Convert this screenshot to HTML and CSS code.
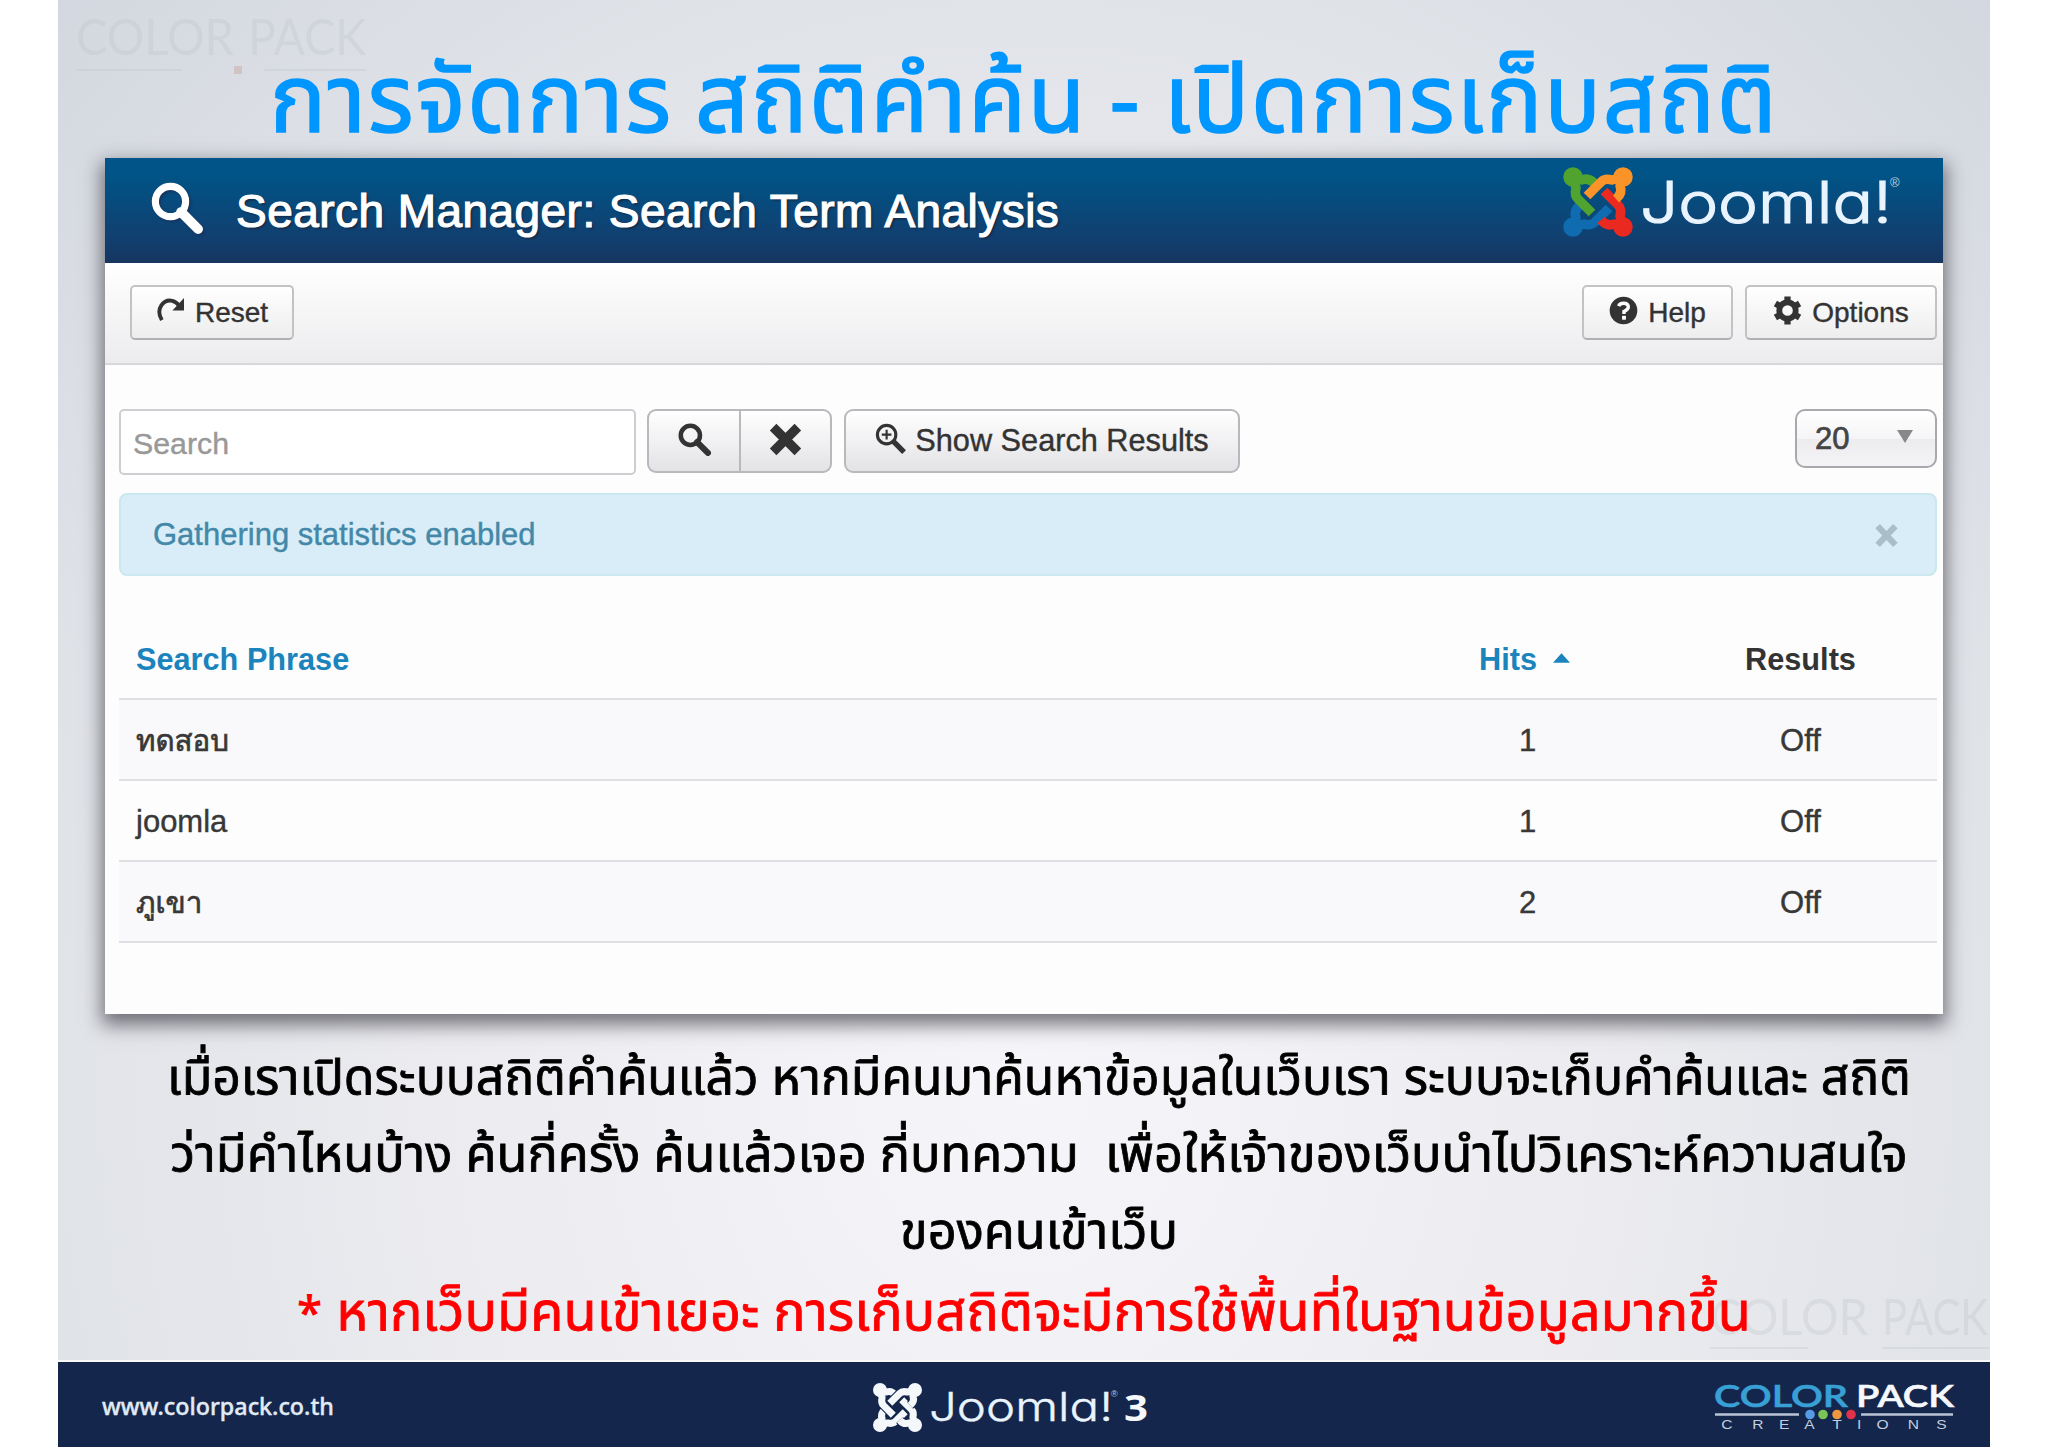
FILE: index.html
```html
<!DOCTYPE html>
<html lang="th">
<head>
<meta charset="utf-8">
<title>Joomla Search Manager</title>
<link rel="stylesheet" href="styles.css">
</head>
<body>
<svg class="defs" aria-hidden="true">
  <defs>
    <g id="arm" fill="none" stroke-linejoin="round">
      <path d="M10 10L19 13Q26 10 32 17M10 10L13 21Q11 28 15 32L29 46"/>
    </g>
    <symbol id="magnifier" viewBox="0 0 32 32">
      <circle cx="12" cy="12" r="9.3" fill="none" stroke="currentColor" stroke-width="4.4"/>
      <path d="M18.5 18.5L29 29" stroke="currentColor" stroke-width="6" stroke-linecap="round"/>
    </symbol>
  </defs>
</svg>
<main class="slide">
  <svg class="mark mark-top" viewBox="0 0 300 90"><text x="2" y="48" textLength="158" lengthAdjust="spacingAndGlyphs">COLOR</text><text x="174" y="48" textLength="118" lengthAdjust="spacingAndGlyphs">PACK</text><path d="M2 63H108M190 63H292" stroke="currentColor" stroke-width="2"/><rect x="160" y="59" width="8" height="8" fill="#c08a80"/></svg>
  <svg class="mark mark-bottom" viewBox="0 0 300 90"><text x="2" y="48" textLength="158" lengthAdjust="spacingAndGlyphs">COLOR</text><text x="174" y="48" textLength="106" lengthAdjust="spacingAndGlyphs">PACK</text><path d="M2 61H100M174 61H282" stroke="currentColor" stroke-width="2"/></svg>
  <h1 class="title">การจัดการ สถิติคำค้น - เปิดการเก็บสถิติ</h1>
  <section class="panel">
    <header class="panel-head">
      <svg class="head-icon"><use href="#magnifier"/></svg>
      <h2>Search Manager: Search Term Analysis</h2>
      <svg class="joomla" viewBox="0 0 342 72">
        <g stroke-width="9.5">
          <g stroke="#0f6cb0" fill="#0f6cb0" transform="rotate(-90 35 35)"><use href="#arm"/><circle cx="10" cy="10" r="5"/></g>
          <g stroke="#ea2a20" fill="#ea2a20" transform="rotate(180 35 35)"><use href="#arm"/><circle cx="10" cy="10" r="5"/></g>
          <g stroke="#4fa32e" fill="#4fa32e"><use href="#arm"/><circle cx="10" cy="10" r="5"/></g>
          <g stroke="#fa9328" fill="#fa9328" transform="rotate(90 35 35)"><use href="#arm"/><circle cx="10" cy="10" r="5"/></g>
        </g>
        <text class="wordmark" x="77" y="56" textLength="252" lengthAdjust="spacingAndGlyphs">Joomla!</text>
        <text class="reg" x="327" y="20">®</text>
      </svg>
    </header>
    <div class="toolbar">
      <button class="btn reset"><svg viewBox="0 0 30 28"><path d="M6 25C-1 13 8 3 17 5Q21 6 24 10" fill="none" stroke="currentColor" stroke-width="4"/><path d="M29 2V15H17Z" fill="currentColor"/></svg>Reset</button>
      <button class="btn help"><svg viewBox="0 0 30 30"><circle cx="15" cy="15" r="14.3" fill="currentColor"/><path d="M10 10.500Q11 7.500 15 7.500Q20 7.500 20 11.500Q20 14 15.500 16V18.500" fill="none" stroke="#fff" stroke-width="3.5"/><rect x="13.500" y="20.500" width="4" height="4" fill="#fff"/></svg>Help</button>
      <button class="btn options"><svg viewBox="0 0 30 30"><circle cx="15" cy="15" r="8.5" fill="none" stroke="currentColor" stroke-width="6"/><path d="M15 .5V6M15 24V29.500M2.500 7.700L7.200 10.500M22.800 19.500L27.500 22.300M2.500 22.300L7.200 19.500M22.800 10.500L27.500 7.700" stroke="currentColor" stroke-width="6.500"/></svg>Options</button>
    </div>
    <div class="content">
      <div class="filters">
        <div class="search">Search</div>
        <div class="group"><button class="btn"><svg viewBox="0 0 32 32"><use href="#magnifier"/></svg></button><button class="btn"><svg viewBox="0 0 32 32"><path d="M4 4L28 28M28 4L4 28" stroke="currentColor" stroke-width="9"/></svg></button></div>
        <button class="btn show"><svg viewBox="0 0 32 32"><circle cx="12" cy="12" r="9.500" fill="none" stroke="currentColor" stroke-width="3.200"/><path d="M12 7V17M7 12H17" stroke="currentColor" stroke-width="2.200"/><path d="M19 19L30 30" stroke="currentColor" stroke-width="5.500"/></svg>Show Search Results</button>
        <div class="select">20<svg viewBox="0 0 16 13"><path d="M0 0H16L8 13Z" fill="#888"/></svg></div>
      </div>
      <div class="alert"><span>Gathering statistics enabled</span><svg viewBox="0 0 22 24"><path d="M2.500 3L19.500 21M19.500 3L2.500 21" stroke="#a8bfca" stroke-width="6"/></svg></div>
      <div class="table">
        <div class="row head"><span class="link">Search Phrase</span><span class="link hits">Hits<svg viewBox="0 0 16 9"><path d="M0 9L8 0L16 9Z" fill="#1b84bd"/></svg></span><span class="res">Results</span></div>
        <div class="row odd"><span class="thai">ทดสอบ</span><span class="num">1</span><span class="res">Off</span></div>
        <div class="row"><span>joomla</span><span class="num">1</span><span class="res">Off</span></div>
        <div class="row odd"><span class="thai">ภูเขา</span><span class="num">2</span><span class="res">Off</span></div>
      </div>
    </div>
  </section>
  <div class="notes">
    <p class="l1">เมื่อเราเปิดระบบสถิติคำค้นแล้ว หากมีคนมาค้นหาข้อมูลในเว็บเรา ระบบจะเก็บคำค้นและ สถิติ</p>
    <p class="l2">ว่ามีคำไหนบ้าง ค้นกี่ครั้ง ค้นแล้วเจอ กี่บทความ&nbsp; เพื่อให้เจ้าของเว็บนำไปวิเคราะห์ความสนใจ</p>
    <p class="l3">ของคนเข้าเว็บ</p>
    <p class="warn"><b>*</b> หากเว็บมีคนเข้าเยอะ การเก็บสถิติจะมีการใช้พื้นที่ในฐานข้อมูลมากขึ้น</p>
  </div>
  <footer class="footer">
    <span class="url">www.colorpack.co.th</span>
    <svg class="joomla3" viewBox="0 0 280 56">
      <g transform="translate(0 3) scale(.7)">
        <g id="knot"><g stroke="#14264b" stroke-width="13"><use href="#arm" transform="rotate(-90 35 35)"/></g><g stroke="#f4f8fb" stroke-width="10" fill="#f4f8fb" transform="rotate(-90 35 35)"><use href="#arm"/><circle cx="10" cy="10" r="5"/></g></g>
        <use href="#knot" transform="rotate(-90 35 35)"/>
        <use href="#knot" transform="rotate(90 35 35)"/>
        <use href="#knot" transform="rotate(180 35 35)"/>
      </g>
      <text class="wordmark" x="56" y="41" textLength="184" lengthAdjust="spacingAndGlyphs">Joomla!</text>
      <text class="reg" x="238" y="17">®</text>
      <text class="three" x="251" y="41" textLength="24" lengthAdjust="spacingAndGlyphs">3</text>
    </svg>
    <svg class="brand" viewBox="0 0 242 60">
      <text class="color" x="0" y="32" textLength="134" lengthAdjust="spacingAndGlyphs">COLOR</text>
      <text class="pack" x="142" y="32" textLength="98" lengthAdjust="spacingAndGlyphs">PACK</text>
      <path d="M1 39.500H85M147 39.500H239" stroke="#b9c5d6" stroke-width="2.500"/>
      <circle cx="96" cy="39.500" r="4.800" fill="#559be5"/><circle cx="109" cy="39.500" r="4.800" fill="#7bc556"/><circle cx="123" cy="39.500" r="4.800" fill="#ed9740"/><circle cx="137" cy="39.500" r="4.800" fill="#e2314a"/>
      <g transform="scale(1.3 1)"><text class="creations" x="5.500 29.500 50 69.500 91 110 125 149 171" y="54">CREATIONS</text></g>
    </svg>
  </footer>
</main>
</body>
</html>
```
FILE: styles.css
```css
* { box-sizing: border-box; }
body { margin: 0; background: #fff; width: 2048px; height: 1447px; overflow: hidden; font-family: "Liberation Sans", "Noto Sans Thai", sans-serif; color: #383838; }
h1, h2, p { margin: 0; font-weight: 400; }
.defs { position: absolute; width: 0; height: 0; }
.slide { position: relative; width: 1932px; height: 1447px; margin-left: 58px; display: flex; flex-direction: column; background: radial-gradient(ellipse at 50% 75%, #f6f5f9 0%, #ececf0 42%, #dfe2e7 75%, #d3d7df 100%); overflow: hidden; }
.mark { position: absolute; width: 300px; height: 90px; color: #bcc3c8; opacity: .3; }
.mark text { font: 400 50px Lato, sans-serif; fill: currentColor; }
.mark-top { left: 16px; top: 7px; }
.mark-bottom { left: 1650px; top: 1287px; }
.title { position: relative; height: 158px; line-height: 207px; font-family: "Noto Sans Thai", "Noto Sans", sans-serif; font-size: 94px; letter-spacing: 1.8px; word-spacing: -4px; -webkit-text-stroke: 1.6px #0096ff; color: #0096ff; text-align: center; white-space: nowrap; flex: none; }
.panel { position: relative; flex: none; width: 1838px; height: 856px; margin-left: 47px; background: #fdfdfe; box-shadow: 0 8px 18px 3px rgba(40,40,48,.62); -webkit-text-stroke: .4px; }
.panel-head { height: 105px; display: flex; align-items: flex-start; background: linear-gradient(#005487 15%, #123e6e 80%, #17355f); padding-left: 46px; }
.head-icon { width: 52px; height: 52px; margin-top: 24px; color: #fff; filter: drop-shadow(2px 2px 1px #17355f); flex: none; }
.panel-head h2 { width: 830px; margin-left: 33px; line-height: 107px; font-size: 46px; letter-spacing: .45px; color: #fff; text-shadow: 2px 2px 2px #172b48; -webkit-text-stroke: 1.2px #fff; white-space: nowrap; }
.joomla { width: 342px; height: 72px; margin: 9px 38px 0 auto; }
.wordmark { font: 300 57px Inter, sans-serif; font-feature-settings: "cv11"; fill: #e9f4ff; stroke: #e9f4ff; stroke-width: 1.2; }
.reg { font: 13px "Liberation Sans", sans-serif; fill: #bdd2e5; }
.toolbar { height: 102px; padding: 22px 6px 0 25px; display: flex; background: linear-gradient(#fff, #ececee); border-bottom: 2px solid #d8d8dc; }
.btn { display: flex; align-items: center; justify-content: center; font: 28px "Liberation Sans", sans-serif; color: #333; border: 2px solid #c3c3c6; border-bottom-color: #b0b0b3; background: linear-gradient(#fff, #ededee); border-radius: 5px; padding: 0; white-space: nowrap; height: 55px; }
.btn svg { flex: none; }
.reset { width: 164px; }
.reset svg { width: 29px; height: 27px; margin: -6px 10px 0 0; }
.help { width: 151px; margin-left: auto; }
.help svg, .options svg { width: 29px; height: 29px; margin: -5px 10px 0 0; }
.options { width: 192px; margin-left: 12px; }
.content { padding: 44px 6px 0 14px; }
.filters { display: flex; height: 84px; align-items: flex-start; }
.search { width: 517px; height: 66px; border: 2px solid #ceced2; border-radius: 5px; padding-left: 12px; line-height: 66px; font-size: 30.3px; color: #999; background: #fff; }
.group { display: flex; margin-left: 11px; }
.filters .btn { height: 64px; font-size: 30.7px; background: linear-gradient(#fff, #e3e2e5); border-color: #b9b9bd; border-radius: 9px; }
.group .btn { width: 93px; }
.group .btn svg { width: 33px; height: 33px; margin-top: -4px; }
.filters .group .btn:first-child { border-radius: 9px 0 0 9px; border-right: 0; width: 92px; }
.filters .group .btn:last-child { border-radius: 0 9px 9px 0; }
.show { width: 396px; margin-left: 12px; }
.show svg { width: 31px; height: 31px; margin: -6px 9px 0 0; }
.select { width: 142px; height: 59px; margin-left: auto; display: flex; align-items: center; justify-content: space-between; padding: 1px 22px 0 18px; border: 2px solid #aaa8ad; border-radius: 10px; background: linear-gradient(#fff, #f5f5f7 50%, #ececef 51%, #f4f3f5); font-size: 31px; color: #444; -webkit-text-stroke: .7px; }
.select svg { width: 16px; height: 13px; margin-top: -6px; }
.alert { height: 83px; border: 2px solid #cce8ef; border-radius: 8px; background: #d8edf7; display: flex; align-items: center; justify-content: space-between; padding: 1px 37px 0 32px; font-size: 31px; color: #4388a8; }
.alert svg { width: 23px; height: 25px; }
.table { padding-top: 43px; font-size: 31px; }
.row { height: 81px; display: grid; grid-template-columns: 1299px 240px 1fr; align-items: center; padding: 2px 0 0 17px; border-bottom: 2px solid #e0dfe3; }
.row.odd { background: #f9f8fa; }
.row.head { font-weight: 700; font-size: 30.7px; color: #333; -webkit-text-stroke: 0; }
.thai { font-family: Loma, Garuda, "Noto Sans Thai Looped", "Noto Sans Thai", sans-serif; font-size: 29.5px; -webkit-text-stroke: .7px; }
.link { color: #1b84bd; }
.hits { padding-left: 44px; }
.hits svg { width: 17px; height: 10px; margin: 0 0 7px 16px; }
.num { padding-left: 84px; }
.res { justify-self: center; padding-right: 11px; }
.notes { position: relative; height: 348px; padding-top: 26px; font-family: "Noto Sans Thai", "Noto Sans", sans-serif; color: #000; text-align: center; font-size: 50.5px; -webkit-text-stroke: .8px; white-space: nowrap; }
.notes p { height: 77px; line-height: 79px; width: 1962px; }
.notes .l1 { font-size: 49.8px; }
.notes .warn { width: 1932px; color: #f00; font-size: 54.1px; line-height: 83px; }
.warn b { font-family: "Noto Sans", sans-serif; font-size: 46px; font-weight: 600; -webkit-text-stroke: 0; }
.footer { position: relative; height: 85px; display: flex; align-items: center; background: #14264b; box-shadow: 0 -2px #f8f8fa; }
.url { width: 770px; padding: 2px 0 0 44px; font: 500 23.300px "Noto Sans", sans-serif; color: #e0ebf5; -webkit-text-stroke: .4px; flex: none; }
.joomla3 { width: 280px; height: 56px; margin: 7px 0 0 45px; }
.joomla3 .wordmark { font-size: 40px; stroke-width: .4; }
.joomla3 .reg { font-size: 9px; }
.three { font: 700 36px "Open Sans", sans-serif; fill: #f4f8fb; }
.brand { width: 242px; height: 60px; margin: 0 34px 0 auto; overflow: visible; }
.color, .pack { font: 600 31px Lato, sans-serif; fill: #38a0d5; stroke: #38a0d5; stroke-width: .6; }
.pack { fill: #f5f8fc; stroke: #f5f8fc; }
.creations { font: 12px "Liberation Sans", sans-serif; fill: #c3cfdf; }
```
